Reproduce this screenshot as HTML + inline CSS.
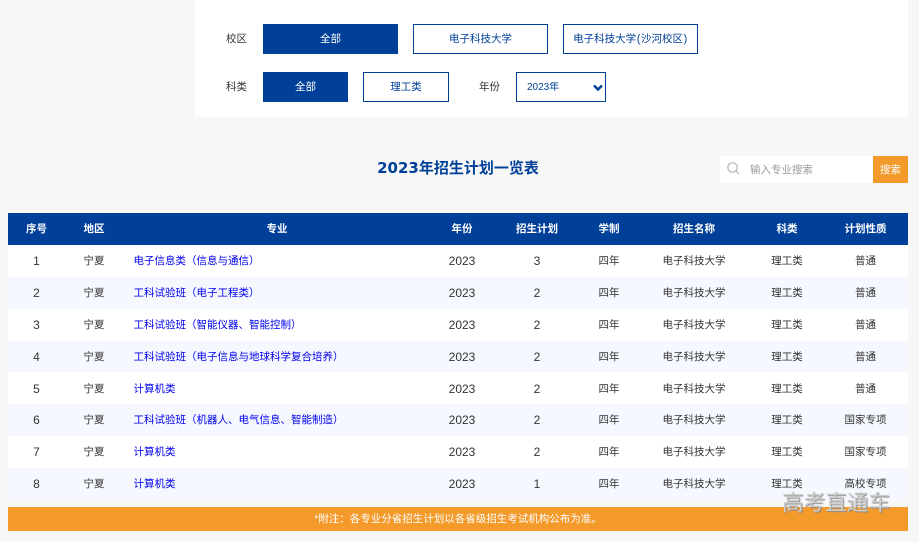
<!DOCTYPE html>
<html lang="zh">
<head>
<meta charset="utf-8">
<style>
html,body{margin:0;padding:0}
body{width:919px;height:542px;overflow:hidden;position:relative;background:#f7f7f7;font-family:"Liberation Sans","Noto Sans CJK SC",sans-serif;font-size:10.5px;color:#333}
.a{position:absolute;box-sizing:border-box}
.panel{left:195px;top:0;width:713px;height:117px;background:#fff}
.lb{height:30px;line-height:30px;text-align:center;color:#333;width:30px}
.btn{height:30px;line-height:28px;text-align:center;border:1px solid #004098;color:#004098;background:#fff;white-space:nowrap}
.btn.on{background:#004098;color:#fff}
.title{left:195px;width:526px;top:158px;text-align:center;font-family:"DejaVu Sans","Noto Sans CJK SC",sans-serif;font-weight:bold;font-size:15px;line-height:20px;color:#004098}
.search{left:720px;top:156px;width:153px;height:27px;background:#fff;color:#999;line-height:28px;padding-left:30px}
.sbtn{left:873px;top:156px;width:35px;height:27px;background:#f39a2b;color:#fff;line-height:28px;text-align:center}
table{position:absolute;left:8px;top:213px;width:900px;border-collapse:collapse;table-layout:fixed}
th{height:32px;line-height:14px;padding:0;background:#004098;color:#fff;font-weight:bold;font-size:10.5px;text-align:center}
td{box-sizing:border-box;height:31.86px;line-height:14px;padding:.5px 0 0;text-align:center;font-size:10.5px;color:#333}
td.n{font-size:12px}
tr.o td{background:#fff}
tr.e td{background:#f5f8fe}
td.m{text-align:left;padding-left:10.5px;color:#0000ee}
.note{left:8px;top:507px;width:900px;height:24px;background:#f39a2b;color:#fff;text-align:center;line-height:24px}
.wm{left:782px;top:489px;font-size:21.6px;line-height:27px;color:#cfcfcf;text-shadow:1px 1px 1px #888;white-space:nowrap}
select{position:absolute;left:516px;top:72px;width:90px;height:30px;border:1px solid #004098;background:#fff;color:#004098;font-family:"Liberation Sans","Noto Sans CJK SC",sans-serif;font-size:10px;padding-left:10px;border-radius:0;margin:0;appearance:none;-webkit-appearance:none}
.p{padding:0 .6px;font-size:11px}
</style>
</head>
<body>
<div class="a panel"></div>

<div class="a lb" style="left:221.5px;top:24px">校区</div>
<div class="a btn on" style="left:263px;top:24px;width:135px">全部</div>
<div class="a btn" style="left:413px;top:24px;width:135px">电子科技大学</div>
<div class="a btn" style="left:563px;top:24px;width:135px">电子科技大学<span class="p">(</span>沙河校区<span class="p">)</span></div>

<div class="a lb" style="left:221.5px;top:72px">科类</div>
<div class="a btn on" style="left:263px;top:72px;width:85px">全部</div>
<div class="a btn" style="left:363px;top:72px;width:86px">理工类</div>
<div class="a lb" style="left:474.5px;top:72px">年份</div>
<select><option>2023年</option></select>
<svg class="a" style="left:591px;top:83px" width="14" height="9" viewBox="0 0 14 9"><path d="M3 2.5 L7 6.5 L11 2.5" fill="none" stroke="#004098" stroke-width="2.4"/></svg>

<div class="a title">2023年招生计划一览表</div>
<div class="a search">输入专业搜索</div>
<svg class="a" style="left:726px;top:161px" width="15" height="15" viewBox="0 0 15 15"><circle cx="6.5" cy="6.5" r="4.7" fill="none" stroke="#b5b5b5" stroke-width="1.2"/><path d="M10 10 L13 13" stroke="#b5b5b5" stroke-width="1.2"/></svg>
<div class="a sbtn">搜索</div>

<table>
<colgroup><col style="width:57px"><col style="width:58px"><col style="width:308px"><col style="width:62px"><col style="width:88px"><col style="width:56px"><col style="width:114px"><col style="width:72px"><col style="width:85px"></colgroup>
<tr><th>序号</th><th>地区</th><th>专业</th><th>年份</th><th>招生计划</th><th>学制</th><th>招生名称</th><th>科类</th><th>计划性质</th></tr>
<tr class="o"><td class="n">1</td><td>宁夏</td><td class="m">电子信息类（信息与通信）</td><td class="n">2023</td><td class="n">3</td><td>四年</td><td>电子科技大学</td><td>理工类</td><td>普通</td></tr>
<tr class="e"><td class="n">2</td><td>宁夏</td><td class="m">工科试验班（电子工程类）</td><td class="n">2023</td><td class="n">2</td><td>四年</td><td>电子科技大学</td><td>理工类</td><td>普通</td></tr>
<tr class="o"><td class="n">3</td><td>宁夏</td><td class="m">工科试验班（智能仪器、智能控制）</td><td class="n">2023</td><td class="n">2</td><td>四年</td><td>电子科技大学</td><td>理工类</td><td>普通</td></tr>
<tr class="e"><td class="n">4</td><td>宁夏</td><td class="m">工科试验班（电子信息与地球科学复合培养）</td><td class="n">2023</td><td class="n">2</td><td>四年</td><td>电子科技大学</td><td>理工类</td><td>普通</td></tr>
<tr class="o"><td class="n">5</td><td>宁夏</td><td class="m">计算机类</td><td class="n">2023</td><td class="n">2</td><td>四年</td><td>电子科技大学</td><td>理工类</td><td>普通</td></tr>
<tr class="e"><td class="n">6</td><td>宁夏</td><td class="m">工科试验班（机器人、电气信息、智能制造）</td><td class="n">2023</td><td class="n">2</td><td>四年</td><td>电子科技大学</td><td>理工类</td><td>国家专项</td></tr>
<tr class="o"><td class="n">7</td><td>宁夏</td><td class="m">计算机类</td><td class="n">2023</td><td class="n">2</td><td>四年</td><td>电子科技大学</td><td>理工类</td><td>国家专项</td></tr>
<tr class="e"><td class="n">8</td><td>宁夏</td><td class="m">计算机类</td><td class="n">2023</td><td class="n">1</td><td>四年</td><td>电子科技大学</td><td>理工类</td><td>高校专项</td></tr>
</table>

<div class="a note">*附注：各专业分省招生计划以各省级招生考试机构公布为准。</div>
<div class="a wm">高考直通车</div>
</body>
</html>
